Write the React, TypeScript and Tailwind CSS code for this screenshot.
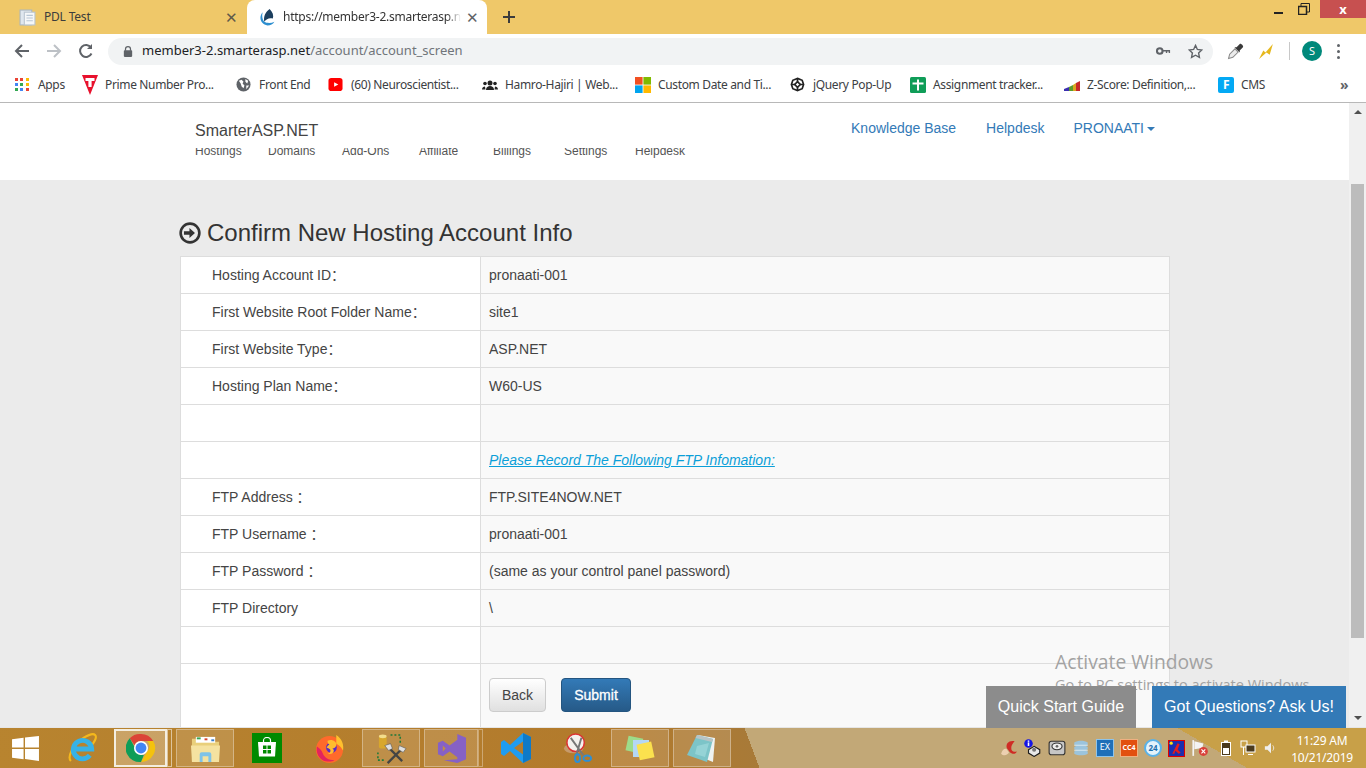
import { ReactNode } from 'react'

const rows: { label: string; value: ReactNode }[] = [
  { label: 'Hosting Account ID：', value: 'pronaati-001' },
  { label: 'First Website Root Folder Name：', value: 'site1' },
  { label: 'First Website Type：', value: 'ASP.NET' },
  { label: 'Hosting Plan Name：', value: 'W60-US' },
  { label: '', value: '' },
  { label: '', value: <a className="italic underline text-[#0b9fd8]">Please Record The Following FTP Infomation:</a> },
  { label: 'FTP Address ：', value: 'FTP.SITE4NOW.NET' },
  { label: 'FTP Username ：', value: 'pronaati-001' },
  { label: 'FTP Password ：', value: '(same as your control panel password)' },
  { label: 'FTP Directory', value: '\\' },
  { label: '', value: '' },
]

const navItems = [
  { name: 'Hostings', w: 'w-[73px]' },
  { name: 'Domains', w: 'w-[74px]' },
  { name: 'Add-Ons', w: 'w-[77px]' },
  { name: 'Affiliate', w: 'w-[74px]' },
  { name: 'Billings', w: 'w-[71px]' },
  { name: 'Settings', w: 'w-[71px]' },
  { name: 'Helpdesk', w: 'w-[70px]' },
]

const Globe = () => (
  <svg viewBox="0 0 16 16" className="w-[15px] h-[15px]">
    <circle cx="8" cy="8" r="7.500" fill="#5f6368" />
    <path d="M3 4l3-1 2 2-1 2 2 2-1 3-2-2-1-3zM10 2l3 2-1 3-2-2zM11 9l3 0-3 4z" fill="#fff" />
  </svg>
)

const bookmarks: { name: string; w: string; icon: ReactNode }[] = [
  {
    name: 'Apps',
    w: 'w-[67px]',
    icon: (
      <div className="grid grid-cols-3 gap-[2px] w-[14px]">
        {['bg-[#ea4335]', 'bg-[#ea4335]', 'bg-[#fbbc05]', 'bg-[#4285f4]', 'bg-[#34a853]', 'bg-[#fbbc05]', 'bg-[#34a853]', 'bg-[#4285f4]', 'bg-[#ea4335]'].map((c, i) => (
          <span key={i} className={`w-[3px] h-[3px] ${c}`} />
        ))}
      </div>
    ),
  },
  {
    name: 'Prime Number Pro...',
    w: 'w-[154px]',
    icon: (
      <svg viewBox="0 0 16 20" className="w-[16px] h-[20px]">
        <path d="M0 0h16L8 20z" fill="#e8112d" />
        <path d="M3.500 3h9v3H9.600v6H6.400V6H3.500z" fill="#fff" />
      </svg>
    ),
  },
  { name: 'Front End', w: 'w-[92px]', icon: <Globe /> },
  {
    name: '(60) Neuroscientist...',
    w: 'w-[154px]',
    icon: (
      <svg viewBox="0 0 16 16" className="w-[15px] h-[15px]">
        <rect x="0.500" y="1" width="15" height="14" rx="3" fill="#f00" />
        <path d="M6.500 5.500v5L11 8z" fill="#fff" />
      </svg>
    ),
  },
  {
    name: 'Hamro-Hajiri | Web...',
    w: 'w-[153px]',
    icon: (
      <svg viewBox="0 0 16 16" className="w-[16px] h-[16px]">
        <circle cx="8" cy="6" r="2.500" fill="#222" />
        <circle cx="3" cy="6.500" r="1.800" fill="#222" />
        <circle cx="13" cy="6.500" r="1.800" fill="#222" />
        <path d="M4 13c0-3 2-4 4-4s4 1 4 4zM0 12.500c0-2 1.500-3 3-3l.5 3zM16 12.500c0-2-1.500-3-3-3l-.5 3z" fill="#222" />
      </svg>
    ),
  },
  {
    name: 'Custom Date and Ti...',
    w: 'w-[155px]',
    icon: (
      <svg viewBox="0 0 16 16" className="w-[16px] h-[16px]">
        <rect width="7.600" height="7.600" fill="#f25022" />
        <rect x="8.400" width="7.600" height="7.600" fill="#7fba00" />
        <rect y="8.400" width="7.600" height="7.600" fill="#00a4ef" />
        <rect x="8.400" y="8.400" width="7.600" height="7.600" fill="#ffb900" />
      </svg>
    ),
  },
  {
    name: 'jQuery Pop-Up',
    w: 'w-[120px]',
    icon: (
      <svg viewBox="0 0 16 16" className="w-[15px] h-[15px]" fill="none" stroke="#222" strokeWidth="1.800">
        <path d="M8 1.500l5 2 1.500 4.500L13 12.500l-5 2-5-2L1.500 8 3 3.500z" />
        <path d="M8 5l3 3-3 3-3-3z" />
        <path d="M8 1.500V5M8 11v3.500M1.500 8H5M11 8h3.500" />
      </svg>
    ),
  },
  {
    name: 'Assignment tracker...',
    w: 'w-[154px]',
    icon: (
      <svg viewBox="0 0 16 16" className="w-[16px] h-[16px]">
        <rect width="16" height="16" rx="1.500" fill="#0f9d58" />
        <path d="M7 2.500h2v3h4.500v2H9v6H7v-6H2.500v-2H7z" fill="#fff" />
      </svg>
    ),
  },
  {
    name: 'Z-Score: Definition,...',
    w: 'w-[154px]',
    icon: (
      <svg viewBox="0 0 16 16" className="w-[16px] h-[16px]">
        <path d="M0 12l5-2v4H0z" fill="#3b2fb0" />
        <path d="M5 10l4-2v6H5z" fill="#5a9b2c" />
        <path d="M9 8l3-2v8H9z" fill="#d9a520" />
        <path d="M12 6l4-2v10h-4z" fill="#c62828" />
      </svg>
    ),
  },
  {
    name: 'CMS',
    w: 'w-[120px]',
    icon: (
      <div className="w-[16px] h-[16px] rounded-[2px] bg-[#03a9f4] text-white text-[12px] font-bold leading-[16px] text-center">F</div>
    ),
  },
]

const ChromeIcon = () => (
  <svg viewBox="0 0 32 32" className="w-[30px] h-[30px]">
    <path d="M16 1a15 15 0 0 1 13 7.500H16a7.500 7.500 0 0 0-6.900 4.500L4 5.500A15 15 0 0 1 16 1z" fill="#db4437" />
    <path d="M29 8.500A15 15 0 0 1 16 31l6.500-11.300a7.500 7.500 0 0 0 0-11.200z" fill="#f4c20d" />
    <path d="M16 31A15 15 0 0 1 4 5.500l6 11a7.500 7.500 0 0 0 9 6.900z" fill="#0f9d58" />
    <circle cx="16" cy="16" r="7.500" fill="#fff" />
    <circle cx="16" cy="16" r="5.800" fill="#4285f4" />
  </svg>
)

const taskIcons = {
  win: (
    <svg viewBox="0 0 28 26" className="w-[27px] h-[25px]">
      <path d="M0 3.500l12-1.700V12H0zM13.500 1.600L28 0v12H13.500zM0 13.500h12v10.700L0 22.500zM13.500 13.500H28V26l-14.500-2z" fill="#fff" />
    </svg>
  ),
  ie: (
    <svg viewBox="0 0 32 32" className="w-[31px] h-[31px]">
      <path d="M4 29C0 25 6 12 17 5c5-3 10-5 12-3 2 2 0 6-3 10" fill="none" stroke="#f5b81c" strokeWidth="2.200" />
      <path d="M7 16.500h18.500A9.500 9.500 0 1 0 23.500 23" fill="none" stroke="#37b2e6" strokeWidth="5" />
    </svg>
  ),
  explorer: (
    <svg viewBox="0 0 32 30" className="w-[31px] h-[29px]">
      <path d="M2 5h9l2 3h17v6H2z" fill="#e9cf7b" />
      <rect x="6" y="3" width="20" height="6" fill="#fff" />
      <rect x="7" y="3.500" width="4" height="2" fill="#3aa655" />
      <rect x="15" y="4.500" width="3" height="2" fill="#d9452f" />
      <rect x="22" y="5.500" width="3" height="2" fill="#3a7fc9" />
      <path d="M1 12h30l-1 17H2z" fill="#f5e2a0" />
      <path d="M10 29v-8a2 2 0 0 1 2-2h8a2 2 0 0 1 2 2v8h-3v-6h-6v6z" fill="#7fc3e8" />
    </svg>
  ),
  store: (
    <div className="w-[30px] h-[30px] bg-[#008a00] flex items-center justify-center">
      <svg viewBox="0 0 20 22" className="w-[20px] h-[22px]">
        <path d="M6.500 5V3.500a3.500 3 0 0 1 7 0V5" fill="none" stroke="#fff" strokeWidth="1.200" />
        <path d="M1 5h18l-1 14.500H2z" fill="#fff" />
        <path d="M6 8.500h3.500V12H6zM10.500 8.500H14V12h-3.500zM6 13h3.500v3.500H6zM10.500 13H14v3.500h-3.500z" fill="#008a00" />
      </svg>
    </div>
  ),
  firefox: (
    <svg viewBox="0 0 32 32" className="w-[31px] h-[31px]">
      <circle cx="16" cy="17" r="14" fill="#ff6a2b" />
      <path d="M23 2c6 4 8 10 7 16-2-3-3-5-7-7z" fill="#ffc02e" />
      <path d="M3 14c-1 6 1 11 6 14 4 2 9 2 12 0-6 0-10-2-12-7-1-3-3-5-6-7z" fill="#e3245e" />
      <circle cx="18" cy="15" r="5.500" fill="#5a2cc4" />
      <path d="M14 8c5-2 9 1 9 4 0 2-2 4-4 4 2 1 2 3 0 5-1 1-4 1-5 0 2 0 3-1 3-3s-3-2-4-3c1-2 2-3 3-3-2-1-2-3-2-4z" fill="#ffbd2e" />
    </svg>
  ),
  tools: (
    <svg viewBox="0 0 34 34" className="w-[33px] h-[33px]">
      <rect x="4" y="4" width="8" height="13" rx="2" fill="#d8a72c" />
      <ellipse cx="8" cy="4.500" rx="4" ry="2" fill="#f2dc8b" />
      <path d="M16 3h10v9M3 21v8h8" fill="none" stroke="#1d7a3a" strokeWidth="1.600" strokeDasharray="2 2" />
      <path d="M13 32l15-15M14 16l14 14" stroke="#444" strokeWidth="2.400" />
      <path d="M10 14l6-2 2 5-4 2zM25 14l7 3-3 4-5-3z" fill="#e0e0e0" stroke="#555" strokeWidth="0.600" />
    </svg>
  ),
  vs: (
    <svg viewBox="0 0 32 32" className="w-[31px] h-[31px]">
      <path d="M22 1l9 4v22l-9 4-14-3 14-1V5zM2 10l5-2 7 5 8-6v18l-8-6-7 5-5-2zM7 13v6l3-3z" fill="#8661c5" fillRule="evenodd" />
    </svg>
  ),
  code: (
    <svg viewBox="0 0 32 32" className="w-[32px] h-[32px]">
      <path d="M23 1l8 4v22l-8 4-13-12-6 5-3-2V10l3-2 6 5zM23 9.500L14 16l9 6.500z" fill="#1f9cf0" fillRule="evenodd" />
      <path d="M23 1l8 4v22l-8 4z" fill="#0e7ac8" />
    </svg>
  ),
  scissors: (
    <svg viewBox="0 0 32 32" className="w-[31px] h-[31px]">
      <ellipse cx="11" cy="16" rx="10" ry="5" fill="#c69a6b" />
      <circle cx="13" cy="10" r="9" fill="#f4f1ee" stroke="#d33" strokeWidth="1.600" />
      <path d="M8 5l13 18M19 5L14 22" stroke="#777" strokeWidth="2" />
      <ellipse cx="15" cy="26" rx="2.600" ry="4" fill="none" stroke="#2d8fd5" strokeWidth="2" />
      <ellipse cx="25" cy="26" rx="4" ry="2.800" fill="none" stroke="#2d8fd5" strokeWidth="2" />
    </svg>
  ),
  sticky: (
    <svg viewBox="0 0 32 32" className="w-[32px] h-[32px]">
      <rect x="3" y="5" width="15" height="15" fill="#9ddc8a" transform="rotate(12 10 12)" />
      <rect x="9" y="8" width="16" height="17" fill="#b4d7f5" />
      <rect x="14" y="11" width="15" height="16" fill="#fbe14e" transform="rotate(-12 21 19)" />
    </svg>
  ),
  notepad: (
    <svg viewBox="0 0 32 32" className="w-[32px] h-[32px]">
      <path d="M12 3l17 3-2 24-10-4z" fill="#eef2f2" />
      <path d="M11 3L1 23l20 7 6-23z" fill="#7cc4c8" />
      <path d="M11 3l16 4-1 3L9.500 6z" fill="#b8c4c6" />
      <path d="M11 14l12-3-4 14-10-3z" fill="#a7dde0" opacity="0.600" />
    </svg>
  ),
}

const trayIcons = [
  <svg key="cc" viewBox="0 0 16 16" className="w-[18px] h-[18px]"><path d="M1 13c1-3 3-5 5-4l2 3c-2 3-5 3-7 1z" fill="#ecd0b0" /><path d="M13 2C8 1 5 4 6 8l3 4c3 2 5 1 6-1-3 1-5 0-5-3 0-2 1-4 3-6z" fill="#cf2b24" /></svg>,
  <svg key="i" viewBox="0 0 16 16" className="w-[18px] h-[18px]"><circle cx="4" cy="4" r="3.800" fill="#1414e6" /><rect x="3.300" y="3" width="1.400" height="3.200" fill="#fff" /><rect x="3.300" y="1.300" width="1.400" height="1.200" fill="#fff" /><path d="M4 9.500l5-3 5 3v3l-5 3-5-3z" fill="#e8e8e8" stroke="#1c1c1c" /><circle cx="9" cy="9.500" r="1.800" fill="#777" /></svg>,
  <svg key="box" viewBox="0 0 16 16" className="w-[18px] h-[18px]"><rect x="1" y="2" width="14" height="12" rx="2" fill="#c6c6c6" stroke="#333" /><ellipse cx="8" cy="6.500" rx="4.500" ry="3" fill="#eee" stroke="#333" /><circle cx="8" cy="6.500" r="1.200" fill="#666" /></svg>,
  <svg key="db" viewBox="0 0 16 16" className="w-[18px] h-[18px]"><path d="M2 3c3-2 9-2 12 0v2l-2 1 2 1v2l-2 1 2 1v2c-3 2-9 2-12 0v-2l2-1-2-1V7l2-1-2-1z" fill="#9cc4dc" /><path d="M2 5.500h12M2 10h12" stroke="#d8e8f0" /></svg>,
  <div key="ex" className="w-[18px] h-[18px] bg-[#1f6fb8] text-white text-[9px] leading-[14px] text-center border border-[#8fc4ea]">EX</div>,
  <div key="cc4" className="w-[18px] h-[18px] bg-[#e2500f] border border-[#f0b080] text-white text-[7px] font-bold leading-[16px] text-center">CC4</div>,
  <div key="24" className="w-[18px] h-[18px] rounded-full bg-[#e4f3fb] border-2 border-[#59b2e8] text-[#1c6fae] text-[8px] font-bold leading-[14px] text-center">24</div>,
  <svg key="red" viewBox="0 0 16 16" className="w-[17px] h-[17px]"><rect x="0.500" y="0.500" width="15" height="15" fill="#1a2fb0" stroke="#e00000" /><path d="M4 13l5-10 2 1-2 5 3 3-2 1-3-3-1 3z" fill="#e51c1c" /><circle cx="3" cy="3" r="1.500" fill="#f7e017" /></svg>,
  <svg key="flag" viewBox="0 0 16 16" className="w-[18px] h-[18px]"><path d="M2 1v14" stroke="#f4f4f4" strokeWidth="1.500" /><path d="M3 2l8 2-1 4-7 1z" fill="#f4f4f4" /><circle cx="11" cy="11" r="4" fill="#d9413a" /><path d="M9.300 9.300l3.400 3.400M12.700 9.300l-3.400 3.400" stroke="#fff" /></svg>,
]

const sysIcons = [
  <svg key="bat" viewBox="0 0 12 16" className="w-[12px] h-[16px]"><rect x="4" y="0.500" width="4" height="2" fill="#fff" /><rect x="1.500" y="2.500" width="9" height="13" fill="#4b3a1d" stroke="#fff" /><rect x="3" y="8" width="6" height="6" fill="#fff" /></svg>,
  <svg key="net" viewBox="0 0 16 16" className="w-[16px] h-[16px]" fill="none" stroke="#fff"><rect x="1" y="1" width="6" height="6" /><rect x="6" y="5" width="9" height="7" fill="#4b3a1d" /><path d="M3.500 7v8M8 14.500h5" /></svg>,
  <svg key="vol" viewBox="0 0 16 16" className="w-[14px] h-[16px]"><path d="M1 6h3l4-4v12l-4-4H1z" fill="#eee" /><path d="M10 5c1.500 2 1.500 4 0 6" fill="none" stroke="#eee" /></svg>,
]

const uiFont = "font-['Noto_Sans','Open_Sans',sans-serif]"

function Task({ w, box, children }: { w: string; box?: string; children?: ReactNode }) {
  return <div className={`${w} ${box ?? ''} h-[38px] flex items-center justify-center shrink-0`}>{children}</div>
}

export default function App() {
  const openBox = 'border border-[#ffffff55] bg-[#ffffff22]'
  return (
    <div className={`w-[1366px] h-[768px] overflow-hidden flex flex-col relative bg-white ${uiFont}`}>
      {/* tab strip */}
      <div className="h-[34px] bg-[#efc869] flex items-end relative shrink-0">
        <div className="w-[247px] h-[34px] flex items-center pl-[19px] pr-[8px] text-[12px] tracking-[-0.2px] text-[#3c3c3c]">
          <svg viewBox="0 0 16 16" className="w-[17px] h-[17px] shrink-0">
            <rect x="1" y="1" width="11" height="14" fill="#dfe7ef" stroke="#a9b6c4" />
            <rect x="5" y="3" width="10" height="12" fill="#f5f7f9" stroke="#b9c4cf" />
            <path d="M7 6h6M7 8.500h6M7 11h6" stroke="#b7c6d6" />
          </svg>
          <span className="ml-[8px] flex-1">PDL Test</span>
          <span className="text-[#5f5a4a] text-[15px] leading-none mr-[1px]">✕</span>
        </div>
        <div className="w-[240px] h-[34px] bg-white rounded-t-[8px] flex items-center pl-[12px] pr-[9px] text-[12px] tracking-[-0.25px] text-[#333]">
          <svg viewBox="0 0 16 16" className="w-[17px] h-[17px] shrink-0">
            <path d="M10 0c3 3 4 6 3 9-3-1-6 0-8 3-1-5 1-9 5-12z" fill="#1c3f5e" />
            <path d="M3.500 3C-1 8 2 15 8 15.500c3 0 5-1 6.500-3.500-3 1.500-7 1.500-9.500 0C3 10 2.500 6 3.500 3z" fill="#2e8fd0" />
          </svg>
          <span className="ml-[7px] w-[178px] shrink-0 whitespace-nowrap overflow-hidden [mask-image:linear-gradient(90deg,#000_92%,transparent)]">https://member3-2.smarterasp.net</span>
          <span className="text-[#5f6368] text-[15px] leading-none ml-[5px]">✕</span>
        </div>
        <svg viewBox="0 0 14 14" className="w-[14px] h-[14px] ml-[15px] mb-[10px]">
          <path d="M7 1v12M1 7h12" stroke="#3c3c3c" strokeWidth="2" />
        </svg>
        <div className="ml-auto flex items-start self-start h-[18px]">
          <svg viewBox="0 0 10 10" className="w-[10px] h-[10px] mt-[6px] mr-[14px]"><rect y="6" width="9" height="2" fill="#222" /></svg>
          <svg viewBox="0 0 12 12" className="w-[12px] h-[12px] mt-[3px] mr-[10px]" fill="none" stroke="#222"><rect x="0.500" y="3.500" width="8" height="8" strokeWidth="1.500" /><path d="M3 3V.5h8.500V9H9" /></svg>
          <div className="w-[46px] h-[18px] bg-[#c75050] flex items-center justify-center text-white text-[13px] font-bold leading-none">x</div>
        </div>
      </div>

      {/* address bar */}
      <div className="h-[34px] bg-white flex items-center shrink-0 pl-[14px]">
        <svg viewBox="0 0 16 16" className="w-[16px] h-[16px]" fill="none" stroke="#5f6368" strokeWidth="2"><path d="M15 8H2M8 2L2 8l6 6" /></svg>
        <svg viewBox="0 0 16 16" className="w-[16px] h-[16px] ml-[16px]" fill="none" stroke="#bdc1c6" strokeWidth="2"><path d="M1 8h13M8 2l6 6-6 6" /></svg>
        <svg viewBox="0 0 16 16" className="w-[16px] h-[16px] ml-[16px]" fill="none" stroke="#5f6368" strokeWidth="2"><path d="M13.500 10.500A6 6 0 1 1 13 4.500" /><path d="M14 1v5h-5z" fill="#5f6368" stroke="none" /></svg>
        <div className="ml-[14px] w-[1105px] h-[27px] rounded-full bg-[#f1f3f4] flex items-center pl-[15px] pr-[10px] text-[13px]">
          <svg viewBox="0 0 12 14" className="w-[10px] h-[13px]"><rect x="1" y="5.500" width="10" height="8" rx="1" fill="#5f6368" /><path d="M3 6V4a3 3 0 0 1 6 0v2" fill="none" stroke="#5f6368" strokeWidth="1.500" /></svg>
          <span className="ml-[9px] text-[#202124]">member3-2.smarterasp.net</span>
          <span className="text-[#70757a]">/account/account_screen</span>
          <svg viewBox="0 0 16 10" className="w-[15px] h-[10px] ml-auto"><circle cx="4" cy="5" r="3" fill="none" stroke="#5f6368" strokeWidth="2.200" /><path d="M7 4h8v3h-1.500V5.500H12V7h-1.500V5.500H7z" fill="#5f6368" /></svg>
          <svg viewBox="0 0 16 16" className="w-[15px] h-[15px] ml-[17px]" fill="none" stroke="#5f6368" strokeWidth="1.500"><path d="M8 1.500l2 4.300 4.700.6-3.400 3.200.9 4.700L8 12l-4.200 2.300.9-4.700L1.300 6.400 6 5.800z" /></svg>
        </div>
        <svg viewBox="0 0 16 16" className="w-[17px] h-[17px] ml-[14px]"><path d="M1.500 14.500l1-4 5-5 3 3-5 5z" fill="#ececec" stroke="#8a8a8a" /><path d="M7 4l2 0 3-3c1-1 4 2 3 3l-3 3 0 2z" fill="#3a3a3a" /></svg>
        <svg viewBox="0 0 16 16" className="w-[17px] h-[17px] ml-[14px]"><path d="M1 15l4-8 2 2 7-8-3 10-3-2z" fill="#e6b81e" /></svg>
        <div className="w-px h-[18px] bg-[#c8c8c8] ml-[14px]" />
        <div className="w-[20px] h-[20px] rounded-full bg-[#00897b] text-white text-[11px] leading-[20px] text-center ml-[12px]">S</div>
        <div className="ml-[15px] flex flex-col gap-[3px]">
          <span className="w-[3px] h-[3px] rounded-full bg-[#5f6368]" />
          <span className="w-[3px] h-[3px] rounded-full bg-[#5f6368]" />
          <span className="w-[3px] h-[3px] rounded-full bg-[#5f6368]" />
        </div>
      </div>

      {/* bookmarks */}
      <div className="h-[35px] bg-white border-b border-[#b8b8b8] flex items-center shrink-0 pl-[15px] pb-[1px] text-[12px] tracking-[-0.35px] text-[#3c4043] relative">
        {bookmarks.map(b => (
          <div key={b.name} className={`${b.w} shrink-0 flex items-center`}>
            <div className="w-[23px] shrink-0">{b.icon}</div>
            <span className="whitespace-nowrap">{b.name}</span>
          </div>
        ))}
        <span className="absolute left-[1340px] text-[14px] font-bold text-[#5f6368] leading-none">»</span>
      </div>

      {/* page */}
      <div className="flex-1 min-h-0 flex font-['Liberation_Sans','Noto_Sans_CJK_SC',sans-serif] text-[14px] text-[#444]">
        <div className="flex-1 min-w-0 overflow-hidden bg-[#ebebeb]">
          <div className="h-[77px] bg-white pl-[195px] pr-[194px] flex justify-between">
            <div>
              <div className="h-[45px] pt-[19px] text-[16px] leading-[18px] text-[#444]">SmarterASP.NET</div>
              <div className="flex h-[10px] overflow-hidden text-[12px] leading-[14px] text-[#555]">
                {navItems.map(n => (
                  <span key={n.name} className={`${n.w} -mt-[4px]`}>{n.name}</span>
                ))}
              </div>
            </div>
            <div className="flex pt-[17px] text-[#337ab7] leading-[16px] text-[14px]">
              <span>Knowledge Base</span>
              <span className="ml-[30px]">Helpdesk</span>
              <span className="ml-[29px] flex items-start">
                PRONAATI
                <span className="ml-[3px] mt-[7px] border-x-[4px] border-x-transparent border-t-[4px] border-t-[#337ab7]" />
              </span>
            </div>
          </div>

          <div className="pl-[180px]">
            <h1 className="h-[76px] flex items-end pb-[9px] text-[24px] leading-[28px] text-[#333]">
              <svg viewBox="0 0 20 20" className="w-[22px] h-[22px] mb-[3px] mr-[6px] -ml-[1px]">
                <circle cx="10" cy="10" r="8.500" fill="none" stroke="#333" strokeWidth="2.400" />
                <path d="M4.500 8.500h5V5.500l5 4.500-5 4.500v-3h-5z" fill="#333" />
              </svg>
              Confirm New Hosting Account Info
            </h1>
            <table className="w-[990px] table-fixed border-collapse">
              <colgroup>
                <col className="w-[300px]" />
                <col />
              </colgroup>
              <tbody>
                {rows.map((r, i) => (
                  <tr key={i} className="h-[37px]">
                    <td className="border border-[#dddddd] bg-white pl-[31px] p-0">{r.label}</td>
                    <td className="border border-[#dddddd] bg-[#f9f9f9] pl-[8px] p-0">{r.value}</td>
                  </tr>
                ))}
                <tr className="h-[80px]">
                  <td className="border border-[#dddddd] bg-white" />
                  <td className="border border-[#dddddd] bg-[#f9f9f9] pl-[8px] align-top pt-[14px]">
                    <div className="flex gap-[15px]">
                      <button className="w-[57px] h-[34px] rounded-[4px] border border-[#cccccc] bg-gradient-to-b from-white to-[#e0e0e0] text-[#444]">Back</button>
                      <button className="w-[70px] h-[34px] rounded-[4px] border border-[#245580] bg-gradient-to-b from-[#337ab7] to-[#265a88] text-white text-[14px] [-webkit-text-stroke:0.3px_white]">Submit</button>
                    </div>
                  </td>
                </tr>
              </tbody>
            </table>
          </div>
        </div>

        {/* scrollbar */}
        <div className="w-[17px] bg-[#f0f0f0] flex flex-col items-center shrink-0">
          <span className="mt-[7px] border-x-[4px] border-x-transparent border-b-[4px] border-b-[#505050]" />
          <div className="w-[13px] h-[454px] bg-[#bcbcbc] mt-[70px]" />
          <span className="mt-auto mb-[7px] border-x-[4px] border-x-transparent border-t-[4px] border-t-[#505050]" />
        </div>
      </div>

      {/* windows watermark + chat buttons float over the page */}
      <div className="absolute left-[1055px] top-[650px] text-[#a2a2a2] font-['Open_Sans',sans-serif] whitespace-nowrap">
        <div className="text-[19.300px] leading-[24px]">Activate Windows</div>
        <div className="text-[14.500px] leading-[20px] mt-[1px]">Go to PC settings to activate Windows.</div>
      </div>
      <div className="absolute left-[986px] top-[686px] w-[150px] h-[42px] bg-[#8c8c8c] text-white text-[16px] font-['Liberation_Sans',sans-serif] flex items-center justify-center">Quick Start Guide</div>
      <div className="absolute left-[1152px] top-[686px] w-[194px] h-[42px] bg-[#337ab7] text-white text-[16px] font-['Liberation_Sans',sans-serif] flex items-center justify-center">Got Questions? Ask Us!</div>

      {/* taskbar */}
      <div className="h-[41px] shrink-0 border-t border-[#e6e6e6] flex items-center bg-[#c2a877] bg-[linear-gradient(69.4deg,#b8842f_0,#b27a2c_600px,#a87a38_711px,transparent_711px),linear-gradient(29.7deg,transparent_618px,#c8a048_618px)]">
        <Task w="w-[50px]">{taskIcons.win}</Task>
        <Task w="w-[64px]">{taskIcons.ie}</Task>
        <Task w="w-[53px]" box="border-2 border-[#f4eee0] bg-[#ffffff44]"><ChromeIcon /></Task>
        <div className="w-[5px] h-[38px] border border-[#ffffff88] mr-[4px] shrink-0" />
        <Task w="w-[58px]" box={openBox}>{taskIcons.explorer}</Task>
        <Task w="w-[4px]" />
        <Task w="w-[58px]">{taskIcons.store}</Task>
        <Task w="w-[4px]" />
        <Task w="w-[58px]">{taskIcons.firefox}</Task>
        <Task w="w-[4px]" />
        <Task w="w-[58px]" box={openBox}>{taskIcons.tools}</Task>
        <Task w="w-[4px]" />
        <Task w="w-[54px]" box={openBox}>{taskIcons.vs}</Task>
        <div className="w-[5px] h-[38px] border border-[#ffffff55] shrink-0" />
        <Task w="w-[4px]" />
        <Task w="w-[58px]">{taskIcons.code}</Task>
        <Task w="w-[4px]" />
        <Task w="w-[58px]">{taskIcons.scissors}</Task>
        <Task w="w-[4px]" />
        <Task w="w-[58px]" box={openBox}>{taskIcons.sticky}</Task>
        <Task w="w-[4px]" />
        <Task w="w-[58px]" box={openBox}>{taskIcons.notepad}</Task>

        <div className="ml-[269px] flex items-center gap-[6px]">
          {trayIcons.map((t, i) => <div key={i} className="shrink-0">{t}</div>)}
        </div>
        <div className="ml-[11px] flex items-center gap-[8px]">
          {sysIcons.map((t, i) => <div key={i} className="shrink-0">{t}</div>)}
        </div>
        <div className="ml-auto mr-[13px] pt-[1px] text-center text-white text-[12px] tracking-[-0.2px] leading-[17px]">
          <div>11:29 AM</div>
          <div>10/21/2019</div>
        </div>
      </div>
    </div>
  )
}
